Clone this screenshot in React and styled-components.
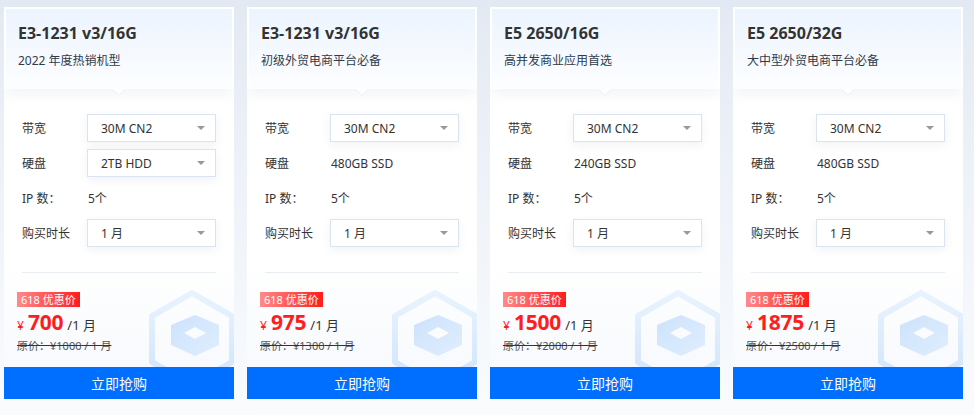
import React from "react";
import styled, { createGlobalStyle } from "styled-components";

const Global = createGlobalStyle`
  html, body { margin: 0; padding: 0; }
  body {
    width: 974px;
    height: 415px;
    overflow: hidden;
    background: linear-gradient(to bottom, #e3e9f2 0%, #ebf0f7 30%, #f2f6fb 65%, #f9fbfd 100%);
    font-family: "Noto Sans", "Noto Sans CJK SC", sans-serif;
    color: #333;
  }
`;

const Page = styled.div`
  display: flex;
  gap: 13px;
  padding: 7px 0 0 4px;
`;

const Card = styled.div`
  position: relative;
  width: 230px;
  height: 392px;
  display: flex;
  flex-direction: column;
  overflow: hidden;
  background: linear-gradient(to bottom, #ffffff 0%, #ffffff 65%, #f5f8fc 100%);
`;

const Header = styled.div`
  position: relative;
  z-index: 2;
  height: 82px;
  box-sizing: border-box;
  border: 2px solid #fff;
  border-bottom: 0;
  padding: 13px 0 0 12px;
  background: linear-gradient(to bottom, #ecf4fe 0%, #f6faff 60%, #fdfeff 100%);
  box-shadow: 0 5px 12px rgba(40, 60, 90, 0.06);
  &::after {
    content: "";
    position: absolute;
    left: 50%;
    bottom: -6px;
    margin-left: -6px;
    border-left: 6px solid transparent;
    border-right: 6px solid transparent;
    border-top: 6px solid #fdfeff;
    filter: drop-shadow(0 1px 0 rgba(0, 0, 0, 0.04));
  }
`;

const Title = styled.div`
  font-size: 16px;
  font-weight: 700;
  line-height: 22px;
  color: #333;
`;

const Subtitle = styled.div`
  margin-top: 9px;
  font-size: 12px;
  line-height: 16px;
  color: #2f3a4a;
`;

const Body = styled.div`
  position: relative;
  z-index: 1;
  flex: 1;
  display: flex;
  flex-direction: column;
  padding: 25px 18px 0 18px;
`;

const Rows = styled.div`
  display: grid;
  grid-template-columns: 65px 129px;
  grid-auto-rows: 28px;
  row-gap: 7px;
  align-items: center;
`;

const Label = styled.div`
  font-size: 12px;
  color: #333;
`;

const Value = styled.div`
  font-size: 12px;
  color: #333;
  padding-left: 1px;
`;

const Select = styled.div`
  height: 28px;
  box-sizing: border-box;
  border: 1px solid #dae4f0;
  background: #fff;
  box-shadow: 0 3px 10px rgba(40, 70, 120, 0.07);
  display: flex;
  align-items: center;
  justify-content: space-between;
  padding: 0 10px 0 13px;
  font-size: 12px;
  color: #333;
`;

const Caret = styled.span`
  width: 0;
  height: 0;
  border-left: 4px solid transparent;
  border-right: 4px solid transparent;
  border-top: 4px solid #999;
`;

const Divider = styled.div`
  height: 1px;
  background: #e9edf2;
  margin: 25px 0 0 0;
`;

const PriceBox = styled.div`
  display: flex;
  flex-direction: column;
  align-items: flex-start;
  margin-left: -5px;
  padding-top: 19px;
`;

const Badge = styled.div`
  height: 15px;
  line-height: 15px;
  padding: 0 4px;
  font-size: 11px;
  color: #fff;
  background: linear-gradient(to right, #ff8a8a, #ff1d1d);
`;

const PriceLine = styled.div`
  display: flex;
  align-items: baseline;
  margin-top: 3px;
  height: 24px;
  line-height: 24px;
  color: #ff1d1d;
`;

const Yen = styled.span`
  font-size: 12px;
  margin-right: 4px;
`;

const Amount = styled.span`
  font-size: 21px;
  font-weight: 700;
  letter-spacing: -0.2px;
`;

const Per = styled.span`
  font-size: 13px;
  color: #333;
  margin-left: 4px;
`;

const OldPrice = styled.div`
  margin-top: 4px;
  font-size: 11px;
  line-height: 16px;
  color: #555;
  text-decoration: line-through;
  text-decoration-color: #333;
`;

const BuyButton = styled.button`
  position: relative;
  z-index: 3;
  margin-top: auto;
  height: 32px;
  width: 100%;
  border: 0;
  background: #006eff;
  color: #fff;
  font-family: "Noto Sans", "Noto Sans CJK SC", sans-serif;
  font-size: 14px;
  cursor: pointer;
`;

const Deco = styled.svg`
  position: absolute;
  left: 0;
  top: 0;
  width: 230px;
  height: 392px;
  z-index: 0;
  pointer-events: none;
`;

function Hexagon({ id }) {
  return (
    <Deco viewBox="0 0 230 392">
      <defs>
        <linearGradient id={`g${id}`} x1="0" y1="0" x2="0" y2="1">
          <stop offset="0" stopColor="#e9f3fe" />
          <stop offset="1" stopColor="#cfe4fc" />
        </linearGradient>
        <linearGradient id={`h${id}`} x1="0" y1="0" x2="1" y2="1">
          <stop offset="0" stopColor="#cce2fc" />
          <stop offset="1" stopColor="#e0eefe" />
        </linearGradient>
      </defs>
      <polygon
        points="188,286 228,309 228,355 188,378 148,355 148,309"
        fill="none"
        stroke={`url(#g${id})`}
        strokeWidth="6"
        strokeLinejoin="round"
      />
      <path
        d="M191,308 L215,318 L215,338 L191,349 L167,338 L167,318 Z M191,320 L202,326 L191,332 L180,326 Z"
        fill={`url(#h${id})`}
        fillRule="evenodd"
      />
    </Deco>
  );
}

const plans = [
  { title: "E3-1231 v3/16G", sub: "2022 年度热销机型", disk: "2TB HDD", diskSelect: true, price: "700", old: "1000" },
  { title: "E3-1231 v3/16G", sub: "初级外贸电商平台必备", disk: "480GB SSD", diskSelect: false, price: "975", old: "1300" },
  { title: "E5 2650/16G", sub: "高并发商业应用首选", disk: "240GB SSD", diskSelect: false, price: "1500", old: "2000" },
  { title: "E5 2650/32G", sub: "大中型外贸电商平台必备", disk: "480GB SSD", diskSelect: false, price: "1875", old: "2500" },
];

export default function App() {
  return (
    <>
      <Global />
      <Page>
        {plans.map((p, i) => (
          <Card key={i}>
            <Hexagon id={i} />
            <Header>
              <Title>{p.title}</Title>
              <Subtitle>{p.sub}</Subtitle>
            </Header>
            <Body>
              <Rows>
                <Label>带宽</Label>
                <Select>
                  <span>30M CN2</span>
                  <Caret />
                </Select>
                <Label>硬盘</Label>
                {p.diskSelect ? (
                  <Select>
                    <span>{p.disk}</span>
                    <Caret />
                  </Select>
                ) : (
                  <Value>{p.disk}</Value>
                )}
                <Label>IP 数：</Label>
                <Value>5个</Value>
                <Label>购买时长</Label>
                <Select>
                  <span>1 月</span>
                  <Caret />
                </Select>
              </Rows>
              <Divider />
              <PriceBox>
                <Badge>618 优惠价</Badge>
                <PriceLine>
                  <Yen>¥</Yen>
                  <Amount>{p.price}</Amount>
                  <Per>/1 月</Per>
                </PriceLine>
                <OldPrice>原价：¥{p.old} / 1 月</OldPrice>
              </PriceBox>
            </Body>
            <BuyButton>立即抢购</BuyButton>
          </Card>
        ))}
      </Page>
    </>
  );
}
